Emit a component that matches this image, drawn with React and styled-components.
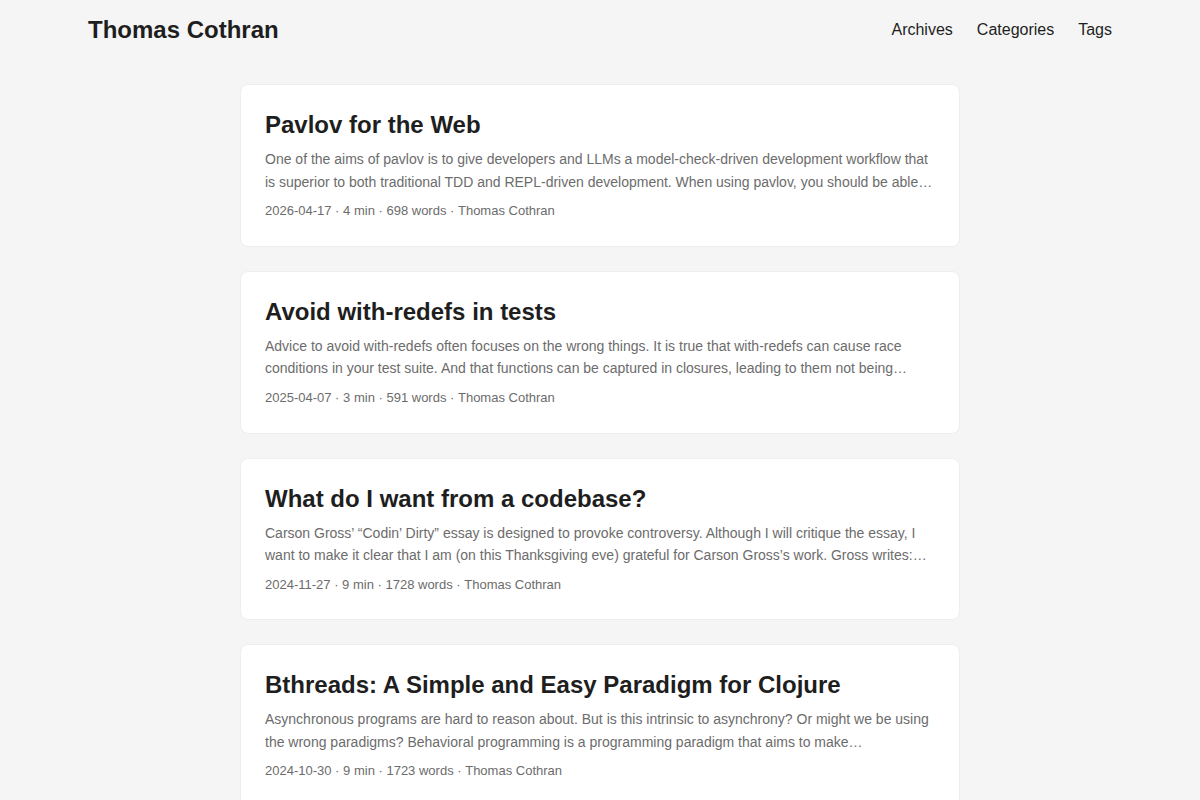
import styled, { createGlobalStyle } from "styled-components";

const GlobalStyle = createGlobalStyle`
  * {
    box-sizing: border-box;
  }
  html, body {
    margin: 0;
    padding: 0;
  }
  body {
    background: rgb(245, 245, 245);
    color: rgb(30, 30, 30);
    font-family: "Liberation Sans", Arial, sans-serif;
    font-size: 18px;
    line-height: 1.6;
  }
`;

const Header = styled.header``;

const Nav = styled.nav`
  display: flex;
  justify-content: space-between;
  max-width: 1072px;
  margin: 0 auto;
  padding: 0 24px;
  line-height: 60px;
`;

const Logo = styled.a`
  font-size: 24px;
  font-weight: 700;
  color: rgb(30, 30, 30);
  text-decoration: none;
`;

const Menu = styled.ul`
  display: flex;
  gap: 24px;
  list-style: none;
  margin: 0;
  padding: 0;
`;

const MenuItem = styled.li`
  font-size: 16px;

  a {
    color: rgb(30, 30, 30);
    text-decoration: none;
  }
`;

const Main = styled.main`
  max-width: 768px;
  margin: 0 auto;
  padding: 24px;
`;

const Entry = styled.article`
  margin-bottom: 24px;
  padding: 24px;
  background: #fff;
  border: 1px solid rgb(238, 238, 238);
  border-radius: 8px;
`;

const EntryTitle = styled.h2`
  margin: 0;
  font-size: 24px;
  line-height: 1.3;
  font-weight: 700;
  color: rgb(30, 30, 30);
`;

const EntryContent = styled.p`
  margin: 8px 0;
  color: rgb(108, 108, 108);
  font-size: 14px;
  line-height: 1.6;
  overflow: hidden;
  display: -webkit-box;
  -webkit-box-orient: vertical;
  -webkit-line-clamp: 2;
`;

const EntryFooter = styled.footer`
  color: rgb(108, 108, 108);
  font-size: 13px;
`;

const posts = [
  {
    title: "Pavlov for the Web",
    summary:
      "One of the aims of pavlov is to give developers and LLMs a model-check-driven development workflow that is superior to both traditional TDD and REPL-driven development. When using pavlov, you should be able to describe the behavior of your program and have it checked exhaustively.",
    date: "2026-04-17",
    min: 4,
    words: 698,
  },
  {
    title: "Avoid with-redefs in tests",
    summary:
      "Advice to avoid with-redefs often focuses on the wrong things. It is true that with-redefs can cause race conditions in your test suite. And that functions can be captured in closures, leading to them not being redefined at all.",
    date: "2025-04-07",
    min: 3,
    words: 591,
  },
  {
    title: "What do I want from a codebase?",
    summary:
      "Carson Gross’ “Codin’ Dirty” essay is designed to provoke controversy. Although I will critique the essay, I want to make it clear that I am (on this Thanksgiving eve) grateful for Carson Gross’s work. Gross writes: something worth quoting here.",
    date: "2024-11-27",
    min: 9,
    words: 1728,
  },
  {
    title: "Bthreads: A Simple and Easy Paradigm for Clojure",
    summary:
      "Asynchronous programs are hard to reason about. But is this intrinsic to asynchrony? Or might we be using the wrong paradigms? Behavioral programming is a programming paradigm that aims to make asynchronous code easier to reason about.",
    date: "2024-10-30",
    min: 9,
    words: 1723,
  },
];

const App = () => {
  return (
    <>
      <GlobalStyle />
      <Header>
        <Nav>
          <Logo href="#">Thomas Cothran</Logo>
          <Menu>
            <MenuItem>
              <a href="#">Archives</a>
            </MenuItem>
            <MenuItem>
              <a href="#">Categories</a>
            </MenuItem>
            <MenuItem>
              <a href="#">Tags</a>
            </MenuItem>
          </Menu>
        </Nav>
      </Header>
      <Main>
        {posts.map((p) => (
          <Entry key={p.title}>
            <EntryTitle>{p.title}</EntryTitle>
            <EntryContent>{p.summary}</EntryContent>
            <EntryFooter>
              {p.date}&nbsp;·&nbsp;{p.min} min&nbsp;·&nbsp;{p.words} words&nbsp;·&nbsp;Thomas
              Cothran
            </EntryFooter>
          </Entry>
        ))}
      </Main>
    </>
  );
};

export default App;
